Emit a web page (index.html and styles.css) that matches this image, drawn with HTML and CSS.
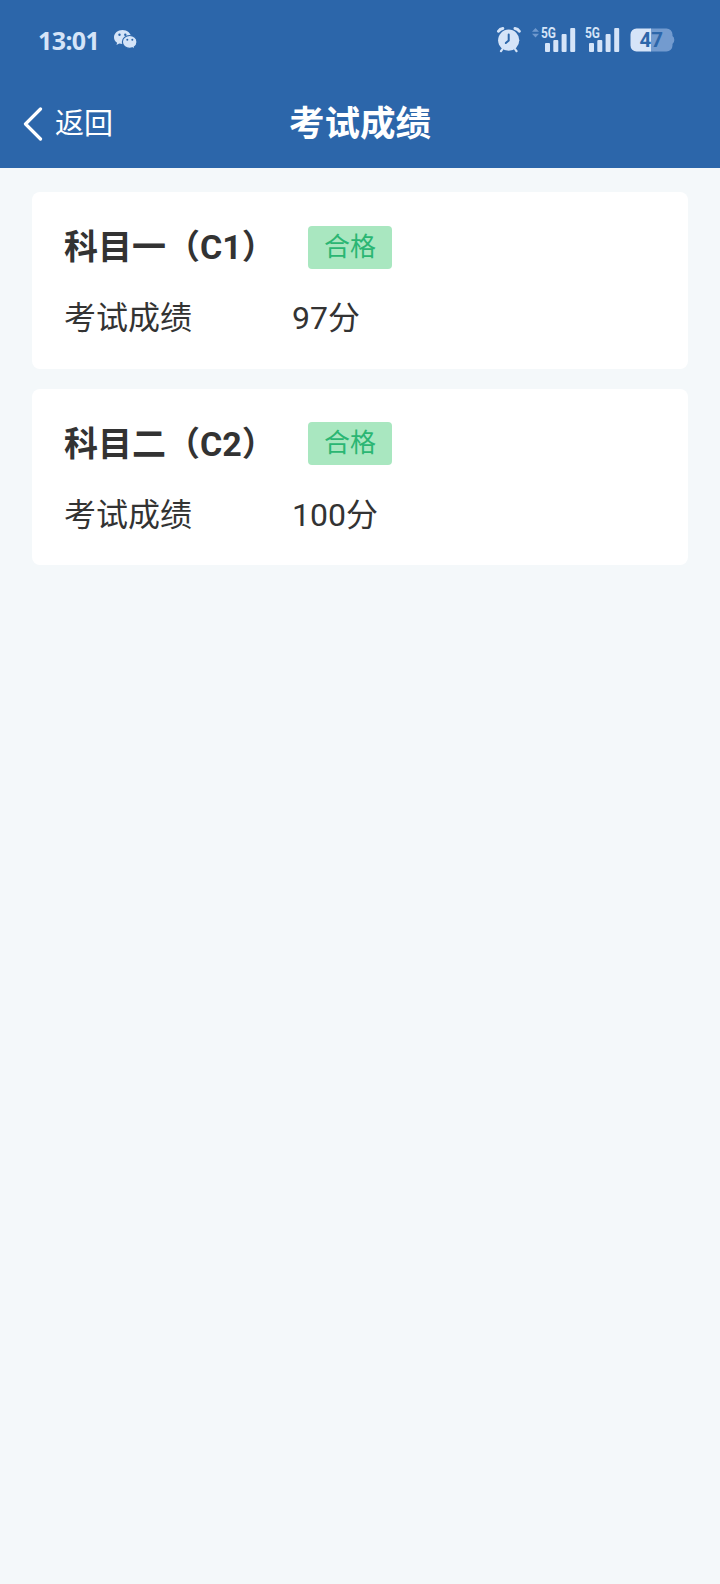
FILE: index.html
```
<!DOCTYPE html>
<html lang="zh-CN">
<head>
<meta charset="utf-8">
<title>考试成绩</title>
<link rel="stylesheet" href="styles.css">
</head>
<body>
<header class="header">
  <div class="status">
    <span class="time">13:01</span>
    <svg class="wechat" width="24" height="20" viewBox="0 0 24 20">
      <path fill="#d5e4f8" d="M8.5 0C3.8 0 0 3.200 0 7.200c0 2.300 1.200 4.200 3.100 5.500L2.500 15l2.700-1.400c1 .3 2.100.5 3.300.5C13.200 14.100 17 11 17 7.100S13.200 0 8.500 0Z"/>
      <path fill="#d5e4f8" stroke="#2c66aa" stroke-width="1.200" d="M15.700 5.500c-4.100 0-7.300 2.800-7.300 6.400s3.200 6.400 7.300 6.400c1 0 1.900-.2 2.800-.5l2.400 1.400-.6-2.300c1.700-1.200 2.700-3 2.700-5 0-3.600-3.200-6.400-7.300-6.400Z"/>
      <g fill="#2c66aa"><circle cx="5.500" cy="4.700" r="1.200"/><circle cx="11.300" cy="4.700" r="1.200"/><circle cx="13.300" cy="9.800" r="1"/><circle cx="18.300" cy="9.800" r="1"/></g>
    </svg>
    <div class="indicators">
      <svg class="alarm" width="26" height="28" viewBox="0 0 26 28">
        <g fill="none" stroke="#d5e4f8" stroke-linecap="round">
          <path stroke-width="3" d="M2.500 5.200Q4 2.700 6.800 2.400M19 2.400Q21.800 2.700 23.300 5.200"/>
          <path stroke-width="2.200" d="M6.500 23 5 25.200M19 23l1.500 2.200"/>
        </g>
        <circle cx="12.700" cy="14.200" r="10.600" fill="#d5e4f8"/>
        <path d="M12.700 8.500v6l-2.900 2.500" fill="none" stroke="#2c66aa" stroke-width="2" stroke-linecap="round"/>
      </svg>
      <svg class="data" width="7" height="10" viewBox="0 0 7 10"><path fill="#6f99ce" d="M3.500 0 7 3.800H0ZM0 5.800h7L3.500 9.600Z"/></svg>
      <svg class="signal" width="36" height="28" viewBox="0 0 36 28">
        <text class="network" x="0" y="11.500" textLength="15" lengthAdjust="spacingAndGlyphs">5G</text>
        <g fill="#d5e4f8"><rect x="4" y="17" width="5" height="9" rx="1"/><rect x="12.300" y="14" width="5" height="12" rx="1"/><rect x="20.600" y="8" width="5" height="18" rx="1"/><rect x="29.200" y="2" width="5" height="24" rx="1"/></g>
      </svg>
      <svg class="signal second" width="36" height="28" viewBox="0 0 36 28">
        <text class="network" x="0" y="11.500" textLength="15" lengthAdjust="spacingAndGlyphs">5G</text>
        <g fill="#d5e4f8"><rect x="4" y="17" width="5" height="9" rx="1"/><rect x="12.300" y="14" width="5" height="12" rx="1"/><rect x="20.600" y="8" width="5" height="18" rx="1"/><rect x="29.200" y="2" width="5" height="24" rx="1"/></g>
      </svg>
      <svg class="battery" width="45" height="24" viewBox="0 0 45 24">
        <path fill="#739bcf" d="M20 .5h16.500a6 6 0 0 1 6 6v1.600Q44.300 9 44.300 12t-1.800 3.900v1.600a6 6 0 0 1-6 6H20Z"/>
        <path fill="#d5e4f8" d="M21 .5H6.500a6 6 0 0 0-6 6v11a6 6 0 0 0 6 6H21Z"/>
        <text class="level" x="9.500" y="19" textLength="23.500" lengthAdjust="spacingAndGlyphs">47</text>
      </svg>
    </div>
  </div>
  <nav class="nav">
    <a class="back">
      <svg width="20" height="34" viewBox="0 0 20 34"><path d="M17.500 2 2.500 17l15 15" fill="none" stroke="#fff" stroke-width="3.200" stroke-linecap="round" stroke-linejoin="round"/></svg>
      <span>返回</span>
    </a>
    <h1 class="title">考试成绩</h1>
  </nav>
</header>
<main class="results">
  <section class="card">
    <div class="row heading"><h2 class="subject">科目一（C1）</h2><span class="badge">合格</span></div>
    <div class="row"><span class="label">考试成绩</span><span class="score">97分</span></div>
  </section>
  <section class="card">
    <div class="row heading"><h2 class="subject">科目二（C2）</h2><span class="badge">合格</span></div>
    <div class="row"><span class="label">考试成绩</span><span class="score">100分</span></div>
  </section>
</main>
</body>
</html>
```
FILE: styles.css
```
* { box-sizing: border-box; }
body {
  margin: 0;
  min-height: 1584px;
  background: #f4f8fa;
  color: #333;
  font-family: Roboto, "Noto Sans CJK SC", sans-serif;
}
h1, h2 { margin: 0; }
.header { height: 168px; background: #2c66aa; color: #fff; }
.status { display: flex; align-items: center; height: 80px; padding: 0 45px 0 38px; }
.time {
  width: 76px;
  color: #d5e4f8;
  font: 700 25px/30px "Noto Sans", sans-serif;
  letter-spacing: -0.6px;
}
.indicators { display: flex; align-items: center; margin-left: auto; }
.data { margin: -15px 2px 0 10px; }
.signal.second { margin-left: 8px; }
.battery { margin-left: 9px; }
.network { fill: #d5e4f8; font: 700 14px Roboto, sans-serif; }
.level { fill: #2c66aa; font: 700 20px Roboto, sans-serif; }
.nav { display: grid; grid-template-columns: 1fr auto 1fr; align-items: center; height: 88px; }
.back { display: flex; align-items: center; gap: 12px; padding-left: 23px; font-size: 29px; line-height: 40px; }
.title { font-size: 35.500px; line-height: 48px; }
.results { display: flex; flex-direction: column; gap: 20px; padding: 24px 32px; }
.card { height: 176.500px; padding: 31px 32px; border-radius: 8px; background: #fff; }
.row { display: flex; align-items: center; height: 48px; font-size: 32px; }
.heading { margin-bottom: 20px; }
.subject { width: 244px; font-size: 34px; line-height: 48px; white-space: nowrap; }
.badge {
  padding: 0 16px;
  border-radius: 4px;
  background: #a9e7c0;
  color: #2bb673;
  font-size: 26px;
  line-height: 43px;
}
.label { width: 228px; }
```
